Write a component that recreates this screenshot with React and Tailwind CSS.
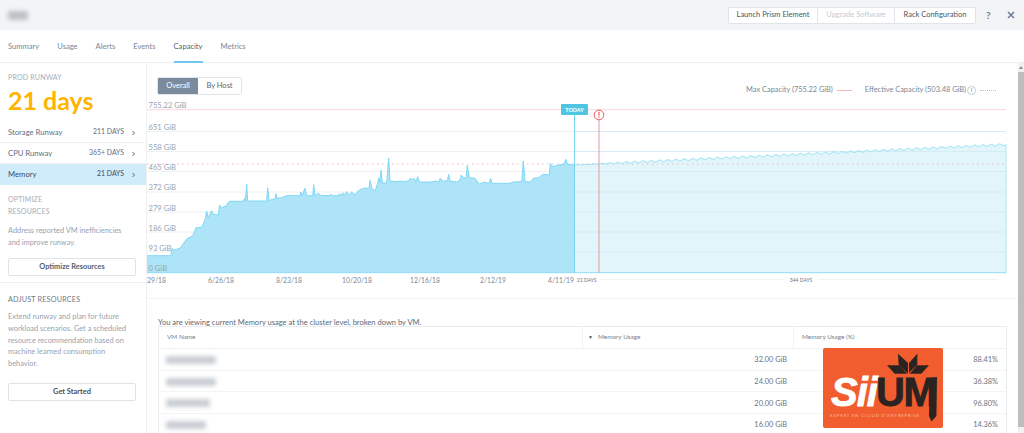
import React from "react";

const z4 = [[62,482],[66,460],[72,465],[90,460],[110,432],[128,422],[138,398],[155,397],[165,375],[170,348],[174,368],[185,347],[190,358],[205,360],[209,330],[212,340],[228,333],[238,319],[280,319],[284,310],[286,318],[290,267],[293,318],[350,318],[353,278],[357,317],[365,313],[375,312],[378,296],[381,310],[395,308],[410,302],[450,302],[452,291],[456,302],[465,280],[470,302],[488,302],[491,269],[495,302],[505,295],[512,301],[540,302],[543,297],[548,302],[565,302],[568,296],[572,302],[578,293],[582,302],[590,290],[596,300],[605,291],[615,300],[625,287],[640,280],[657,280],[660,256],[666,280],[675,288],[683,265],[686,248],[690,262],[693,226],[697,265],[710,263],[716,190],[720,258],[735,260],[755,258],[760,260],[775,258],[782,249],[788,255],[792,250],[798,260],[803,245],[808,261],[845,261],[855,258],[868,261]];
const z5 = [[0,250],[10,258],[22,258],[26,238],[30,258],[50,261],[60,256],[64,240],[70,248],[78,250],[82,212],[88,248],[105,250],[118,267],[130,262],[148,265],[152,250],[156,265],[210,265],[220,261],[245,260],[250,198],[255,260],[272,261],[280,250],[295,248],[310,238],[328,240],[331,205],[338,215],[355,210],[372,208],[378,193],[382,208],[403,210]];

const history = [
  [147, 255.7],
  ...z4.map(([x, y]) => [150 + x / 3, 95 + y / 3]),
  ...z5.map(([x, y]) => [440 + x / 3, 95 + y / 3]),
];
const hLine = history.map((p) => p.map((n) => n.toFixed(1)).join(",")).join(" ");
const hArea = `147,272.7 ${hLine} 574.5,272.7`;

const forecast = [];
for (let x = 574.5; x <= 1006; x += 1) {
  const t = (x - 574.5) / 431.5;
  const y = 165 - 20.5 * t - 0.9 * Math.sin((x - 574.5) / 1.32) * Math.min(1, t * 8);
  forecast.push([x, y]);
}
const fLine = forecast.map((p) => p.map((n) => n.toFixed(1)).join(",")).join(" ");
const fArea = `574.5,272.7 ${fLine} 1006,272.7`;

const yLabels = [
  ["755.22 GiB", 108],
  ["651 GiB", 130],
  ["558 GiB", 150],
  ["465 GiB", 170],
  ["372 GiB", 190],
  ["279 GiB", 211],
  ["186 GiB", 231],
  ["93 GiB", 251],
  ["0 GiB", 271],
];
const gridY = [131.5, 151.5, 171.5, 192, 212, 232, 252];
const xLabels = [
  ["6/26/18", 221],
  ["8/23/18", 289],
  ["10/20/18", 357],
  ["12/16/18", 425],
  ["2/12/19", 493],
  ["4/11/19", 561],
];

function Chart() {
  return (
    <svg width="871" height="187" viewBox="147 100 871 187" className="block shrink-0">
      {gridY.map((y) => (
        <line key={y} x1="147" x2="1006" y1={y} y2={y} stroke="#eef0f2" strokeWidth="1" />
      ))}
      <line x1="147" x2="1006" y1="109.7" y2="109.7" stroke="#f9d5da" strokeWidth="1" />
      <polygon points={fArea} fill="#e2f5fb" />
      <polygon points={hArea} fill="#ade4f7" />
      {gridY.map((y) => (
        <line key={y} x1="574.5" x2="1006" y1={y} y2={y} stroke="#d5ecf4" strokeWidth="1" />
      ))}
      <line x1="147" x2="1006" y1="164" y2="164" stroke="#eeb9c6" strokeWidth="1" strokeDasharray="1.5 3.5" />
      <polyline points={hLine} fill="none" stroke="#7fd8f5" strokeWidth="1" />
      <polyline points={fLine} fill="none" stroke="#8fdff3" strokeWidth="1" />
      <line x1="147" x2="1006" y1="272.7" y2="272.7" stroke="#8fdcf5" strokeWidth="1" />
      <line x1="1006" x2="1006" y1="144" y2="272.7" stroke="#a6e4f4" strokeWidth="1" />
      {yLabels.map(([t, y]) => (
        <text key={t} x="148.5" y={y} fontSize="7.6" fill="#9aa3ab" fontFamily="Lato, sans-serif">{t}</text>
      ))}
      <text x="147" y="283" fontSize="6.8" fill="#7d8894" fontFamily="Lato, sans-serif">29/18</text>
      {xLabels.map(([t, x]) => (
        <text key={t} x={x} y="283" fontSize="6.8" textAnchor="middle" fill="#7d8894" fontFamily="Lato, sans-serif">{t}</text>
      ))}
      <line x1="574.5" x2="574.5" y1="112" y2="272.7" stroke="#79d2ee" strokeWidth="1" />
      <line x1="599" x2="599" y1="119" y2="272.7" stroke="#e39aa2" strokeWidth="1" />
      <rect x="561" y="104" width="27" height="11" rx="1" fill="#50c5e2" />
      <text x="574.5" y="111.5" fontSize="5.4" fontWeight="700" textAnchor="middle" fill="#ffffff" fontFamily="Lato, sans-serif">TODAY</text>
      <circle cx="599" cy="115" r="4.8" fill="#ffffff" stroke="#ee5f64" strokeWidth="1" />
      <rect x="598.4" y="112" width="1.2" height="3.7" fill="#ee5f64" />
      <rect x="598.4" y="116.6" width="1.2" height="1.2" fill="#ee5f64" />
      <text x="577" y="281.5" fontSize="5" fill="#6d7883" fontFamily="Lato, sans-serif">21 DAYS</text>
      <line x1="600" x2="784" y1="279.5" y2="279.5" stroke="#f1f3f5" strokeWidth="1" />
      <text x="801" y="281.5" fontSize="5" textAnchor="middle" fill="#6d7883" fontFamily="Lato, sans-serif">344 DAYS</text>
      <line x1="818" x2="998" y1="279.5" y2="279.5" stroke="#f1f3f5" strokeWidth="1" />
    </svg>
  );
}

function Chevron() {
  return (
    <svg width="5" height="6" viewBox="0 0 5 6" className="ml-[7px] mt-px">
      <path d="M1.5 1 L3.5 3 L1.5 5" fill="none" stroke="#5b6b7e" strokeWidth="1" />
    </svg>
  );
}

function RunwayRow({ label, value, active }) {
  return (
    <div className={active ? "flex h-[21px] items-center justify-between bg-[#d0ebfa] pl-2 pr-[10px] text-[#3f4d5e]" : "flex h-[21px] items-center justify-between border-b border-[#eef0f2] pl-2 pr-[10px] text-[#5f6e80]"}>
      <span className="mt-px text-[7.7px] leading-none">{label}</span>
      <span className="flex items-center">
        <span className="mb-[2px] text-[6.9px] leading-none">{value}</span>
        <Chevron />
      </span>
    </div>
  );
}

function Sidebar() {
  return (
    <aside className="flex h-full w-[147px] shrink-0 flex-col border-r border-[#eef0f2]">
      <div className="mt-[9px] pl-2 text-[7px] leading-[10px] tracking-[0.2px] text-[#a4adb8]">PROD RUNWAY</div>
      <div className="mt-[3px] pl-2 text-[25px] font-bold leading-[30px] text-[#ffb400]">21 days</div>
      <div className="mt-[7px]">
        <RunwayRow label="Storage Runway" value="211 DAYS" />
        <RunwayRow label="CPU Runway" value="365+ DAYS" />
        <RunwayRow label="Memory" value="21 DAYS" active />
      </div>
      <div className="mt-[8px] pl-2 text-[7px] leading-[12px] tracking-[0.2px] text-[#a4adb8]">OPTIMIZE<br />RESOURCES</div>
      <div className="mt-[8px] pl-2 text-[7.4px] leading-[12px] text-[#98a2af]">Address reported VM inefficiencies<br />and improve runway.</div>
      <button className="mx-2 mt-[9px] h-[18px] w-[128px] shrink-0 rounded-[2px] border border-[#dfe3e8] bg-white text-[7.4px] font-bold leading-none text-[#56616e]">Optimize Resources</button>
      <div className="mt-[6px] border-b border-[#eef0f2]" />
      <div className="mt-[11px] pl-2 text-[7.2px] leading-[12px] tracking-[0.2px] text-[#6d7986]">ADJUST RESOURCES</div>
      <div className="mt-[5px] pl-2 text-[7.4px] leading-[11.75px] text-[#98a2af]">
        Extend runway and plan for future<br />workload scenarios. Get a scheduled<br />resource recommendation based on<br />machine learned consumption<br />behavior.
      </div>
      <button className="mx-2 mt-[13px] h-[18px] w-[128px] shrink-0 rounded-[2px] border border-[#dfe3e8] bg-white text-[7.4px] font-bold leading-none text-[#474f59]">Get Started</button>
    </aside>
  );
}

const rows = [
  ["w-[50px]", "32.00 GiB", "88.41%"],
  ["w-[50px]", "24.00 GiB", "36.38%"],
  ["w-[44px]", "20.00 GiB", "96.80%"],
  ["w-[40px]", "16.00 GiB", "14.36%"],
];

function Logo() {
  return (
    <div className="absolute left-[823px] top-[348px] h-[80px] w-[120px] overflow-hidden rounded-[2px] bg-[#f15d2e]">
      <svg width="120" height="80" viewBox="0 0 120 80" className="absolute left-0 top-0">
        <g fill="#2a2321">
          <polygon points="75,5.7 85,15 85,25.7 75.7,16.7" />
          <polygon points="94.3,5.7 86,15 86,25 94.3,16.7" />
          <polygon points="64,17.3 76.7,17.3 84,25.7 71.7,25.7" />
          <polygon points="106,17.3 94,17.3 86.7,25.7 98.3,25.7" />
          <polygon points="107,30 114,29 113.4,68 108.5,73.5 106,68" />
        </g>
      </svg>
      <span className="absolute left-[8px] top-[22px] text-[40px] font-bold italic leading-[44px] tracking-[-1px] text-white [-webkit-text-stroke:0.8px_#ffffff] [font-family:'Liberation_Sans',sans-serif]">Sii</span>
      <span className="absolute left-[53px] top-[22px] text-[40px] font-bold leading-[44px] tracking-[-1.5px] text-[#2a2321] [-webkit-text-stroke:0.8px_#2a2321] [font-family:'Liberation_Sans',sans-serif]">UM</span>
      <span className="absolute left-[7px] top-[65px] whitespace-nowrap text-[4.4px] leading-[6px] tracking-[0.72px] text-[#f8b79f]">EXPERT EN CLOUD D'ENTREPRISE</span>
    </div>
  );
}

export default function App() {
  return (
    <div className="relative flex h-[433px] w-[1024px] flex-col overflow-hidden bg-white [font-family:Lato,sans-serif]">
      <header className="flex h-[30px] shrink-0 items-center justify-between bg-[#f2f4f6] pl-2">
        <div className="h-[9px] w-[20px] rounded-[2px] bg-[#bcc0c5] blur-[2px]" />
        <div className="flex items-center">
          <div className="flex h-[17px] overflow-hidden rounded-[2px] border border-[#e1e5ea] bg-white text-[7.5px] leading-none">
            <div className="flex w-[89px] items-center justify-center border-r border-[#e1e5ea] text-[#4b5561]">Launch Prism Element</div>
            <div className="flex w-[77px] items-center justify-center border-r border-[#e1e5ea] text-[#c5cbd2]">Upgrade Software</div>
            <div className="flex w-[80px] items-center justify-center text-[#4b5561]">Rack Configuration</div>
          </div>
          <span className="ml-[10px] w-[6px] text-[10px] font-bold leading-none text-[#6f8095]">?</span>
          <svg width="8" height="8" viewBox="0 0 8 8" className="ml-[15px] mr-[9px]">
            <path d="M1 1 L7 7 M7 1 L1 7" stroke="#6f8095" strokeWidth="1.6" />
          </svg>
        </div>
      </header>
      <nav className="flex h-[33px] shrink-0 gap-[18px] border-b border-[#eef0f2] pl-2 text-[7.6px] text-[#7a8694]">
        {["Summary", "Usage", "Alerts", "Events", "Capacity", "Metrics"].map((t) => (
          <div key={t} className={t === "Capacity" ? "relative flex h-[32px] items-center pt-[2px] text-[#56616e]" : "flex h-[32px] items-center pt-[2px]"}>
            {t}
            {t === "Capacity" && <div className="absolute -bottom-px left-0 right-0 h-[2px] bg-[#72c8f3]" />}
          </div>
        ))}
      </nav>
      <div className="flex min-h-0 flex-1">
        <Sidebar />
        <main className="flex min-w-0 flex-1 flex-col">
          <div className="flex h-[37px] shrink-0 items-start justify-between pl-[10px] pr-[22px] pt-[14px]">
            <div className="flex h-[18px] overflow-hidden rounded-[2px] border border-[#e1e5ea] text-[7.5px] leading-none">
              <div className="flex w-[40px] items-center justify-center bg-[#7b8a9d] text-white">Overall</div>
              <div className="flex w-[43px] items-center justify-center bg-white text-[#5a6572]">By Host</div>
            </div>
            <div className="mt-[8px] flex h-[10px] items-center text-[7.4px] leading-none text-[#7d8894]">
              <span>Max Capacity (755.22 GiB)</span>
              <span className="ml-1 h-px w-[15px] bg-[#f5b6c0]" />
              <span className="ml-[13px]">Effective Capacity (503.48 GiB)</span>
              <span className="ml-px flex h-[9px] w-[9px] items-center justify-center rounded-full border border-[#c3ccd6] text-[6.5px] text-[#7d8894]">i</span>
              <span className="ml-[4px] w-[16px] border-t border-dotted border-[#eea9b7]" />
            </div>
          </div>
          <Chart />
          <div className="mt-[11px] shrink-0 border-t border-[#f0f2f4]" />
          <div className="ml-[11px] mt-[19px] h-[10px] shrink-0 whitespace-nowrap text-[7.55px] leading-[10px] text-[#5d6874]">You are viewing current Memory usage at the cluster level, broken down by VM.</div>
          <div className="ml-[11px] mt-[-2px] w-[849px] flex-1 border-l border-r border-t border-[#e9ecef]">
            <div className="flex h-[22px] items-center border-b border-[#f0f2f4] text-[6.4px] leading-none text-[#75818f]">
              <div className="w-[423px] pl-2">VM Name</div>
              <div className="flex h-full w-[211px] items-center border-l border-[#f0f2f4] pl-[5px]">
                <span className="mr-[5px] text-[5px] text-[#46505c]">▼</span>Memory Usage
              </div>
              <div className="flex h-full flex-1 items-center border-l border-[#f0f2f4] pl-2">Memory Usage (%)</div>
            </div>
            {rows.map(([w, mem, pct]) => (
              <div key={pct} className="flex h-[21.7px] items-center border-b border-[#f3f4f6] pt-px text-[7.4px] leading-none text-[#6c7580]">
                <div className="w-[423px] pl-[7px]">
                  <div className={`h-[8px] rounded-[2px] bg-[#c9ced4] blur-[2px] ${w}`} />
                </div>
                <div className="w-[205px] text-right">{mem}</div>
                <div className="flex-1 pr-[8px] text-right">{pct}</div>
              </div>
            ))}
          </div>
        </main>
        <div className="flex h-full w-[6px] shrink-0 flex-col items-center bg-[#f1f1f1]">
          <div className="mt-[3px] h-0 w-0 border-x-[2px] border-b-[3px] border-x-transparent border-b-[#8a8a8a]" />
          <div className="mt-[3px] h-[355px] w-full shrink-0 bg-[#bdbdbd]" />
        </div>
      </div>
      <Logo />
    </div>
  );
}
